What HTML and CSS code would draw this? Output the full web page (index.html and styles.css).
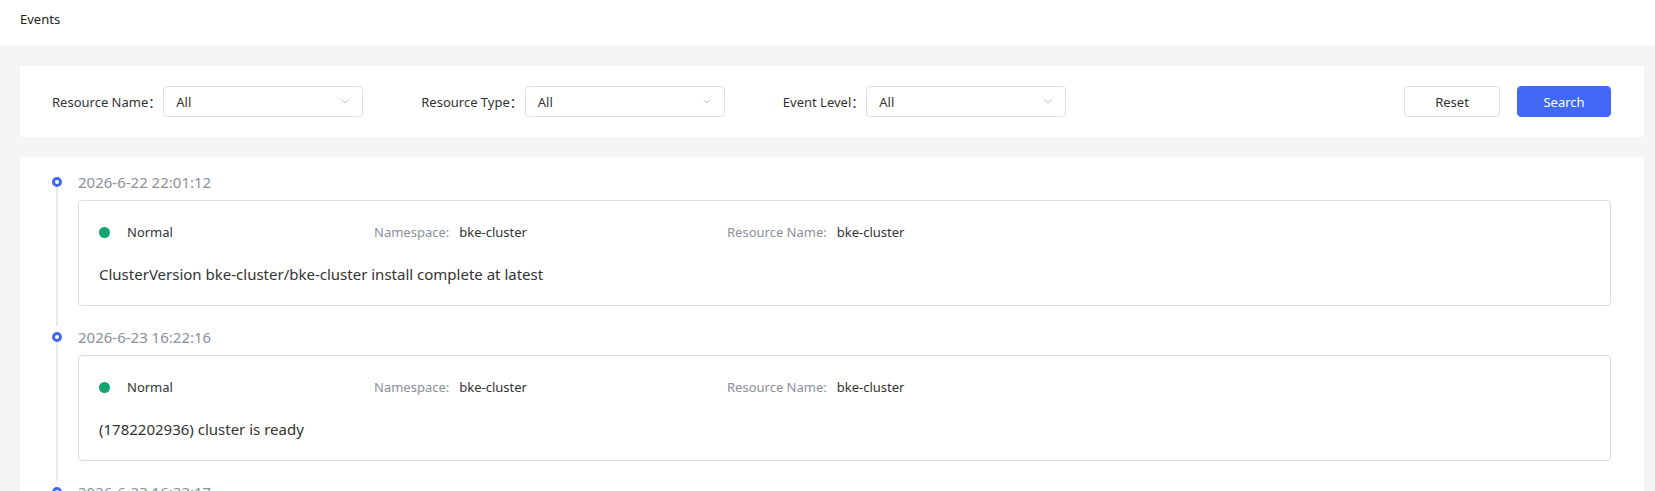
FILE: index.html
```html
<!DOCTYPE html>
<html lang="en">
<head>
<meta charset="utf-8">
<title>Events</title>
<link rel="stylesheet" href="styles.css">
</head>
<body>
<header class="page-header">Events</header>
<main class="page-body">
  <section class="filter-card">
    <div class="filter-group">
      <label class="filter-label">Resource Name：</label>
      <div class="select"><span>All</span><svg class="chev" viewBox="0 0 8 5" width="8" height="5"><path d="M0.5 0.5 L4 4 L7.5 0.5" fill="none" stroke="#c0c4cc" stroke-width="1"/></svg></div>
    </div>
    <div class="filter-group">
      <label class="filter-label">Resource Type：</label>
      <div class="select"><span>All</span><svg class="chev" viewBox="0 0 8 5" width="8" height="5"><path d="M0.5 0.5 L4 4 L7.5 0.5" fill="none" stroke="#c0c4cc" stroke-width="1"/></svg></div>
    </div>
    <div class="filter-group">
      <label class="filter-label">Event Level：</label>
      <div class="select"><span>All</span><svg class="chev" viewBox="0 0 8 5" width="8" height="5"><path d="M0.5 0.5 L4 4 L7.5 0.5" fill="none" stroke="#c0c4cc" stroke-width="1"/></svg></div>
    </div>
    <div class="filter-actions">
      <button class="btn btn-reset">Reset</button>
      <button class="btn btn-search">Search</button>
    </div>
  </section>

  <section class="timeline-card">
    <div class="tl-item">
      <div class="tl-axis"><span class="tl-dot"></span><span class="tl-line"></span></div>
      <div class="tl-content">
        <div class="tl-date">2026-6-22 22:01:12</div>
        <div class="event-box">
          <div class="event-row">
            <div class="col col-level"><span class="level-dot"></span>Normal</div>
            <div class="col col-ns"><span class="k">Namespace:</span><span class="v">bke-cluster</span></div>
            <div class="col"><span class="k">Resource Name:</span><span class="v">bke-cluster</span></div>
          </div>
          <div class="event-msg">ClusterVersion bke-cluster/bke-cluster install complete at latest</div>
        </div>
      </div>
    </div>
    <div class="tl-item">
      <div class="tl-axis"><span class="tl-dot"></span><span class="tl-line"></span></div>
      <div class="tl-content">
        <div class="tl-date">2026-6-23 16:22:16</div>
        <div class="event-box">
          <div class="event-row">
            <div class="col col-level"><span class="level-dot"></span>Normal</div>
            <div class="col col-ns"><span class="k">Namespace:</span><span class="v">bke-cluster</span></div>
            <div class="col"><span class="k">Resource Name:</span><span class="v">bke-cluster</span></div>
          </div>
          <div class="event-msg">(1782202936) cluster is ready</div>
        </div>
      </div>
    </div>
    <div class="tl-item">
      <div class="tl-axis"><span class="tl-dot"></span><span class="tl-line"></span></div>
      <div class="tl-content">
        <div class="tl-date">2026-6-23 16:22:17</div>
        <div class="event-box">
          <div class="event-row">
            <div class="col col-level"><span class="level-dot"></span>Normal</div>
            <div class="col col-ns"><span class="k">Namespace:</span><span class="v">bke-cluster</span></div>
            <div class="col"><span class="k">Resource Name:</span><span class="v">bke-cluster</span></div>
          </div>
          <div class="event-msg">cluster is ready</div>
        </div>
      </div>
    </div>
  </section>
</main>
</body>
</html>
```

FILE: styles.css
```css
* { box-sizing: border-box; }
html, body { margin: 0; padding: 0; }
body {
  background: #f5f5f5;
  font-family: "Noto Sans", "Noto Sans CJK SC", sans-serif;
  color: #333;
  font-size: 13px;
  overflow: hidden;
  height: 491px;
}
.page-header {
  background: #fff;
  height: 45px;
  padding: 9px 20px 0;
  line-height: 20px;
  font-size: 13px;
  color: #222;
}
.page-body {
  padding: 21px 11px 0 20px;
}
.filter-card {
  background: #fff;
  height: 71px;
  display: flex;
  align-items: center;
  padding: 0 33px 0 32px;
}
.filter-group {
  display: flex;
  align-items: center;
  margin-right: 58px;
}
.filter-label {
  color: #333;
  font-size: 13px;
  margin-right: 2px;
}
.select {
  width: 200px;
  height: 31px;
  border: 1px solid #dcdfe6;
  border-radius: 4px;
  display: flex;
  align-items: center;
  justify-content: space-between;
  padding: 0 13px 0 12px;
  font-size: 13px;
  color: #333;
}
.chev { display: block; }
.filter-actions {
  margin-left: auto;
  display: flex;
  gap: 17px;
}
.btn {
  height: 31px;
  border-radius: 4px;
  font-family: inherit;
  font-size: 13px;
  cursor: pointer;
}
.btn-reset {
  width: 96px;
  background: #fff;
  border: 1px solid #dcdfe6;
  color: #333;
}
.btn-search {
  width: 94px;
  background: #4169f6;
  border: 1px solid #4169f6;
  color: #fff;
}
.timeline-card {
  margin-top: 20px;
  background: #fff;
  border-radius: 4px;
  padding: 14px 33px 0 30px;
  height: 400px;
}
.tl-item {
  display: flex;
}
.tl-axis {
  width: 28px;
  flex: none;
  display: flex;
  flex-direction: column;
  align-items: flex-start;
}
.tl-dot {
  width: 10px;
  height: 10px;
  border: 3px solid #4169f6;
  border-radius: 50%;
  margin: 6px 0 0 2px;
  flex: none;
}
.tl-line {
  flex: 1;
  width: 2px;
  background: #e8e8e8;
  margin-left: 6px;
}
.tl-content {
  flex: 1;
  padding-bottom: 20px;
}
.tl-date {
  line-height: 22px;
  font-size: 15px;
  color: #8b9099;
  margin-bottom: 7px;
}
.event-box {
  border: 1px solid #dcdcdc;
  border-radius: 4px;
  padding: 21px 20px 20px;
}
.event-row {
  display: flex;
  align-items: center;
  height: 20px;
  font-size: 13px;
}
.col { display: flex; align-items: center; }
.col-level { width: 275px; color: #333; }
.col-ns { width: 353px; }
.level-dot {
  width: 11px;
  height: 11px;
  border-radius: 50%;
  background: #12a66f;
  margin-right: 17px;
}
.k { color: #8b9099; margin-right: 10px; }
.v { color: #333; }
.event-msg {
  margin-top: 21px;
  line-height: 22px;
  font-size: 15px;
  color: #333;
}
```
